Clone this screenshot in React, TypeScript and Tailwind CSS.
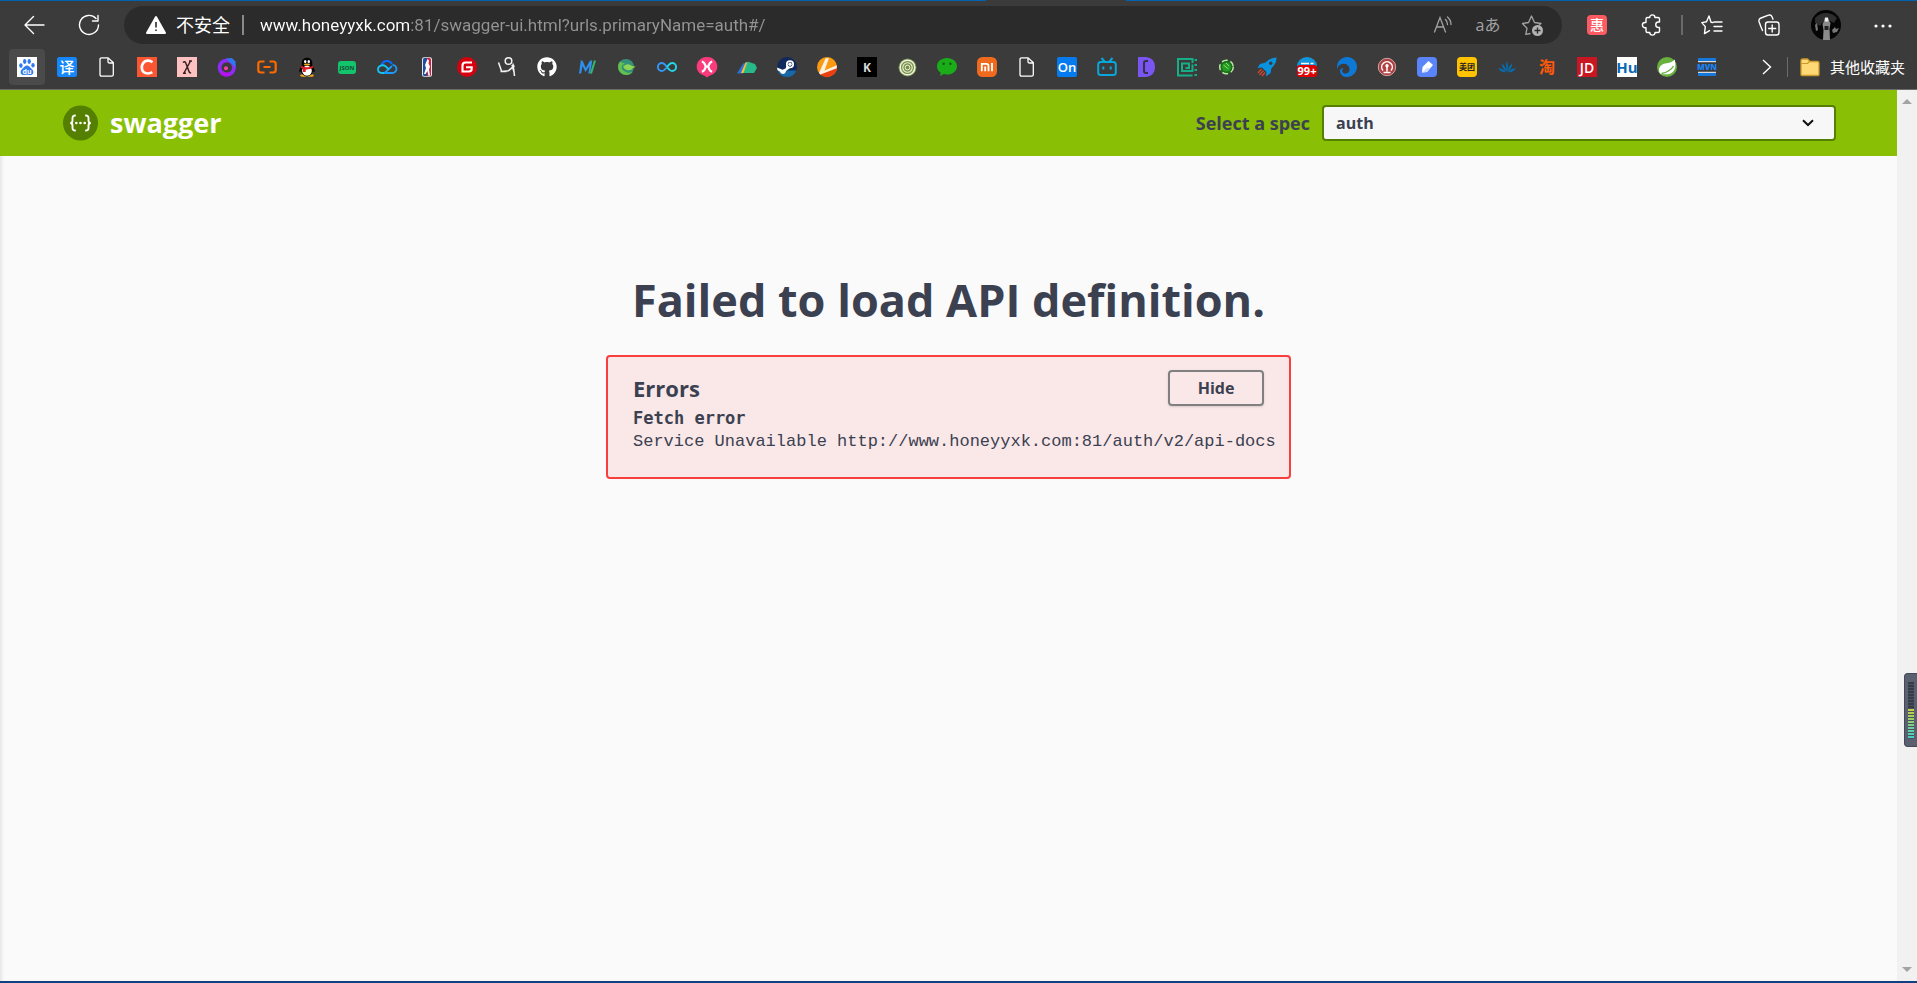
import { ReactNode, useState } from 'react';
import { FaGithub } from 'react-icons/fa';

const FONT = 'font-["Open_Sans","Noto_Sans_CJK_SC",sans-serif]';

interface Bookmark {
    name: string;
    icon: ReactNode;
}

const PageIcon = () => (
    <path d="M3 2.500Q3 .8 4.700 .8h6.300L16.300 5.500v12q0 1.700-1.700 1.700H4.700Q3 19.200 3 17.500zM11 1v3.500Q11 6 12.500 6H16" fill="none" stroke="#fff" strokeWidth="1.300" />
);

const bookmarks: Bookmark[] = [
    {
        name: 'Baidu',
        icon: (
            <>
                <rect width="20" height="20" fill="#fff" />
                <g fill="#2f7cf0">
                    <ellipse cx="3.900" cy="8.600" rx="1.700" ry="2.300" />
                    <ellipse cx="7.700" cy="4.500" rx="1.700" ry="2.400" />
                    <ellipse cx="12.200" cy="4.500" rx="1.700" ry="2.400" />
                    <ellipse cx="16" cy="8.300" rx="1.700" ry="2.200" />
                    <path d="M10 8.500c2 0 2.800 1.500 4 2.800 1.600 1.500 2.900 2.800 2.300 4.800-.6 2-2.500 2.200-4 1.900-1.600-.3-3-.3-4.600 0-1.500.3-3.400.1-4-1.900-.6-2 .7-3.300 2.300-4.800 1.200-1.300 2-2.800 4-2.800z" />
                </g>
                <text x="10" y="16.800" fontSize="7" fontWeight="700" textAnchor="middle" fill="#fff">du</text>
            </>
        ),
    },
    {
        name: 'Translate',
        icon: (
            <>
                <rect width="20" height="20" rx="2.500" fill="#1687fb" />
                <text x="10" y="15.500" fontSize="15" fontWeight="500" textAnchor="middle" fill="#fff">译</text>
            </>
        ),
    },
    { name: 'Page', icon: <PageIcon /> },
    {
        name: 'CSDN',
        icon: (
            <>
                <rect width="20" height="20" fill="#fc5531" />
                <path d="M15.500 5.200C12.500 2.900 8.300 3 6.200 6c-2 2.800-1.900 6.800.4 9 2.300 2 6 1.900 8.700.2" fill="none" stroke="#fff" strokeWidth="2.700" />
            </>
        ),
    },
    {
        name: 'Chi',
        icon: (
            <>
                <rect width="20" height="20" fill="#fdc1c1" />
                <path d="M6 5.500q2-2 3 1l3 8q.8 2 2 1M13.500 4L7 16M6 16.200h3M12 4h3" fill="none" stroke="#3a2020" strokeWidth="1.500" />
            </>
        ),
    },
    {
        name: 'Orbit',
        icon: (
            <>
                <circle cx="9.800" cy="10.500" r="7.200" fill="none" stroke="#8d2cf5" strokeWidth="3.800" />
                <path d="M3 16.500a9 9 0 0011 2l-1.500-3.500a5.500 5.500 0 01-6.500-1.200z" fill="#b512f0" />
                <path d="M9 1.500l9.500 9V4.500L15 1z" fill="#2f78ec" />
                <circle cx="9" cy="11.300" r="2" fill="#ff3fa8" />
            </>
        ),
    },
    {
        name: 'Aliyun',
        icon: (
            <path d="M7.500 4.500H3.800Q1.300 4.500 1.300 7v6q0 2.500 2.500 2.500h3.700M12.500 4.500h3.700q2.500 0 2.500 2.500v6q0 2.500-2.500 2.500h-3.700M6.500 10h7" fill="none" stroke="#ff6a00" strokeWidth="2.200" />
        ),
    },
    {
        name: 'QQ',
        icon: (
            <>
                <ellipse cx="6.500" cy="18.500" rx="3.300" ry="1.300" fill="#f7a81b" />
                <ellipse cx="13.500" cy="18.500" rx="3.300" ry="1.300" fill="#f7a81b" />
                <path d="M10 .8c3.700 0 5.300 2.500 5.300 5.800v2.200c1.500 1.800 2.600 4 2.500 5.800-.1 1-.9.500-1.800-.6-.5 3-2.600 5-6 5s-5.500-2-6-5c-.9 1.100-1.700 1.600-1.800.6-.1-1.800 1-4 2.500-5.800V6.600C4.700 3.300 6.300.8 10 .8z" fill="#050505" />
                <ellipse cx="10" cy="13.700" rx="4.800" ry="5" fill="#fff" />
                <ellipse cx="8.200" cy="4.600" rx="1.200" ry="1.600" fill="#fff" />
                <ellipse cx="11.800" cy="4.600" rx="1.200" ry="1.600" fill="#fff" />
                <ellipse cx="10" cy="7.500" rx="3.200" ry="1" fill="#f7a81b" />
                <path d="M4.300 8.800q5.700 3 11.400 0l.5 1.900q-4 2-7.500 1.700v2.600H6v-3.200l-2.200-1.100z" fill="#e01b24" />
            </>
        ),
    },
    {
        name: 'JSON',
        icon: (
            <>
                <rect x="1" y="4" width="18" height="13" rx="3" fill="#12c46b" />
                <text x="10" y="12.800" fontSize="6" fontWeight="700" textAnchor="middle" fill="#1b4a35">JSON</text>
            </>
        ),
    },
    {
        name: 'Tencent Cloud',
        icon: (
            <>
                <path d="M4.500 8.500A5.600 5.600 0 0115 7" fill="none" stroke="#0a6cff" strokeWidth="2" />
                <path d="M15.500 7.800a4 4 0 01-.3 8.200H7.500l7.500-7" fill="none" stroke="#1a9bff" strokeWidth="1.800" />
                <path d="M12 12.500L8.500 9.300C6 7.300 1 8.300 1 12.300 1 14.500 2.500 16 5 16h2" fill="none" stroke="#12c6f5" strokeWidth="1.800" />
            </>
        ),
    },
    {
        name: 'NBA',
        icon: (
            <>
                <rect x="5" y=".3" width="10" height="19.400" rx="2" fill="#e8e8ee" />
                <path d="M6 2.500Q6 1 7.500 1H10v18H7.500Q6 19 6 17.500z" fill="#1d4f9f" />
                <path d="M10 1h2.500Q14 1 14 2.500v15q0 1.500-1.500 1.500H10z" fill="#d2213c" />
                <path d="M10.500 2l1.500 1.500-.5 3 1.500 3-1 3 1 6-1.500.5-1-5-2 3-1.500 0 2-6-1-3z" fill="#fff" />
            </>
        ),
    },
    {
        name: 'Gitee',
        icon: (
            <>
                <circle cx="10" cy="10" r="10" fill="#d8000f" />
                <path d="M15 5.500H8.500q-3 0-3 3v6h6.500q2.700 0 2.700-2.700v-1.500H9" fill="none" stroke="#fff" strokeWidth="2.100" />
            </>
        ),
    },
    {
        name: 'Dancer',
        icon: (
            <g fill="none" stroke="#f4f4f4" strokeWidth="1.500">
                <circle cx="11.500" cy="4" r="3.300" />
                <path d="M1.500 5.500l3.200 9 6.800-.8 6-5M16 6.500l1.500 12.500M3.500 14.500h6M15 8l2 7" />
            </g>
        ),
    },
    { name: 'GitHub', icon: <FaGithub size={20} color="#fff" /> },
    {
        name: 'Mark',
        icon: (
            <>
                <path d="M2 16.500h2.200L5.500 9l3 6 4-6-1.200 7.500h2L15.300 3.500h-2.200L8.800 11 5.500 3.500H3.800z" fill="#2f8fea" />
                <path d="M18 3.500l-4 13" stroke="#30bd67" strokeWidth="2" />
            </>
        ),
    },
    {
        name: 'Leaf',
        icon: (
            <>
                <circle cx="9" cy="10" r="8" fill="#35907a" />
                <path d="M3 4.500A8 8 0 003 15a8 8 0 0013-.5 8 8 0 01-11-2.500Q3.500 8 8 6.500 5 6 3 4.500z" fill="#63c04c" />
                <path d="M6 9.500q5-4 9-.5l4 .7-3 1.300q-2 3-6 2-3-1-4-3.500z" fill="#8ed554" />
            </>
        ),
    },
    {
        name: 'Infinity',
        icon: (
            <>
                <path d="M10 10C8 7.300 6.800 6 4.900 6a4 4 0 000 8c1.900 0 3.100-1.300 5.100-4" fill="none" stroke="#3297f8" strokeWidth="1.900" />
                <path d="M10 10c2-2.700 3.200-4 5.100-4a4 4 0 010 8c-1.900 0-3.100-1.300-5.100-4" fill="none" stroke="#20d8e8" strokeWidth="1.900" />
            </>
        ),
    },
    {
        name: 'XMind',
        icon: (
            <>
                <path d="M10 0a9.800 9.500 0 012.500 18.800L10 20.500l-2.500-1.700A9.800 9.500 0 0110 0z" fill="#fb3b7b" />
                <path d="M4.800 4.700Q7 5 8.300 8.300q.6 1.400 0 2.800Q7 14.300 4.800 14.700M15.200 4.700Q13 5 11.700 8.300q-.6 1.400 0 2.800 1.300 3.200 3.500 3.600M8.500 9.700h3" fill="none" stroke="#fff" strokeWidth="2.200" />
            </>
        ),
    },
    {
        name: 'Hills',
        icon: (
            <>
                <path d="M0 16.500L6 6.500l3-1-3 11z" fill="#2f6fde" />
                <path d="M4 16L8.500 5.500 11.500 5 8 16z" fill="#fbc02d" />
                <path d="M6.500 16l4-11.500L18 7l2 4-3 5z" fill="#27b98a" />
            </>
        ),
    },
    {
        name: 'Steam',
        icon: (
            <>
                <circle cx="10" cy="10" r="10" fill="#10285b" />
                <path d="M.6 13.500a10 10 0 0018.800 0z" fill="#1869a5" />
                <path d="M0 10.500l5.500 2.200 3-1.200 1.500-4 3 3.500-4 3q-.5 3-3.200 3-2.300 0-2.900-2.400L.5 13.200z" fill="#fff" />
                <circle cx="13" cy="7.300" r="3.200" fill="#10285b" stroke="#fff" strokeWidth="1.700" />
                <circle cx="13" cy="7.300" r="1.700" fill="#fff" />
            </>
        ),
    },
    {
        name: 'Flare',
        icon: (
            <>
                <circle cx="10" cy="10" r="10" fill="#fb9a12" />
                <path d="M19.800 8.500a10 10 0 01-17 8.500z" fill="#ea3f10" />
                <path d="M8.500 1.500L12 1 7.500 13.500l12.300-5.300v3L3.500 17.500l-1.500-1.500z" fill="#fff1df" />
            </>
        ),
    },
    {
        name: 'Kuang',
        icon: (
            <>
                <rect width="20" height="20" fill="#000" />
                <text x="10" y="14.500" fontSize="12" fontWeight="700" textAnchor="middle" fill="#d9d9d9">K</text>
            </>
        ),
    },
    {
        name: 'Rings',
        icon: (
            <g fill="none" stroke="#eef3dc">
                <circle cx="10.500" cy="10.500" r="9" fill="#78904b" stroke="none" />
                <circle cx="10.500" cy="10.500" r="7.300" strokeWidth="1.500" />
                <circle cx="10.500" cy="10.500" r="4.700" strokeWidth="1.100" />
                <circle cx="10.500" cy="10.500" r="2.400" strokeWidth="1" />
            </g>
        ),
    },
    {
        name: 'WeChat',
        icon: (
            <>
                <path d="M10 1c5.600 0 10 3.600 10 8.200s-4.400 8.300-10 8.300c-1.200 0-2.300-.1-3.300-.4L3 19l.7-3.300C1.400 14.200 0 11.900 0 9.200 0 4.600 4.400 1 10 1z" fill="#1aad19" />
                <circle cx="6.600" cy="6.800" r="1.300" fill="#155d17" />
                <circle cx="13.400" cy="6.800" r="1.300" fill="#155d17" />
            </>
        ),
    },
    {
        name: 'Xiaomi',
        icon: (
            <>
                <rect width="20" height="20" rx="5.500" fill="#f06a1d" />
                <path d="M4.800 14.200V6.800h4.500q2.200 0 2.200 2.200v5.200M8.200 14.200V9.500M15 6v8.200" fill="none" stroke="#fff" strokeWidth="1.800" />
            </>
        ),
    },
    { name: 'Document', icon: <PageIcon /> },
    {
        name: 'ProcessOn',
        icon: (
            <>
                <rect width="20" height="20" rx="2" fill="#067bef" />
                <text x="10" y="15" fontSize="13" fontWeight="600" textAnchor="middle" fill="#fff">On</text>
            </>
        ),
    },
    {
        name: 'Bilibili',
        icon: (
            <g stroke="#09a6dc" strokeWidth="2" fill="none">
                <rect x="1.200" y="5" width="17.600" height="13" rx="2.500" />
                <path d="M4.500 1l3 3.500M15.500 1l-3 3.500M6.300 9.500v3M13.700 9.500v3" />
            </g>
        ),
    },
    {
        name: 'Docs',
        icon: (
            <>
                <path d="M1 0h8q9 1 9 10t-9 10H1z" fill="#7a55f2" />
                <path d="M11 4H9Q7 4 7 6v8q0 2 2 2h2" fill="none" stroke="#343148" strokeWidth="2" />
            </>
        ),
    },
    {
        name: 'Maze',
        icon: (
            <path d="M15.500 6V2H1v16.500h14.500M15.500 7.500v6.500H5V6.500h7v4.500H8.500M17.500 3h2.500M17.500 8h2.500M17.500 13h2.500M17.500 18h2.500" fill="none" stroke="#15ae86" strokeWidth="2" />
        ),
    },
    {
        name: 'Cell',
        icon: (
            <>
                <circle cx="9.500" cy="10" r="7" fill="#1d6a20" />
                <circle cx="9.500" cy="10" r="6.800" fill="none" stroke="#b9e6a2" strokeWidth="1.500" strokeDasharray="6 3" />
                <circle cx="9.500" cy="10" r="4.500" fill="#239c1f" />
                <path d="M6.500 8l5 4M9 6l3 3" stroke="#8dde6a" />
            </>
        ),
    },
    {
        name: 'Rocket',
        icon: (
            <>
                <path d="M19.500.5q-7 .5-11 5L3 7 .5 11 5 10.500 9.500 15 9 19.500l4.500-3.500 1-5q5-4 5-10.500z" fill="#0993df" />
                <circle cx="13.700" cy="6.300" r="1.700" fill="#3b3b3b" />
                <path d="M4.500 12L1 16M6.500 13.500L2.500 18M8 15.500L5 19" stroke="#d8452a" strokeWidth="1.200" />
            </>
        ),
    },
    {
        name: 'Messages',
        icon: (
            <>
                <path d="M0 9a10 9 0 0120 0z" fill="#1296db" />
                <path d="M4 6.500h8M13.500 6.500h3" stroke="#fff" strokeWidth="1.500" />
                <rect y="8" width="20" height="12" rx="3" fill="#df0000" />
                <text x="10" y="17.800" fontSize="11" fontWeight="700" textAnchor="middle" fill="#fff">99+</text>
            </>
        ),
    },
    {
        name: 'Crescent',
        icon: (
            <path d="M5.500 18.900A10 10 0 10.200 12q1.300-4.700 6-5.200 5.300 0 6.300 4.700.3 4.300-3.700 5-3.300 0-3.600-2.800 0-1.900 1.600-2.700-3.400-.4-4 2.500-.2 3 2.700 5.400z" fill="#0d78d6" />
        ),
    },
    {
        name: 'Railway',
        icon: (
            <>
                <circle cx="10" cy="10" r="8.700" fill="#b04042" stroke="#cfa5a3" />
                <path d="M6 13.500a5.300 5.300 0 118 0M10 9v5.500M6.500 15.500h7" fill="none" stroke="#fff" strokeWidth="1.500" />
                <circle cx="10" cy="8.800" r="1.700" fill="#fff" />
            </>
        ),
    },
    {
        name: 'Notes',
        icon: (
            <>
                <rect width="20" height="20" rx="4" fill="#5a84fa" />
                <path d="M5 15.500l.5-5.500L11.500 4l4.500 4-6 7z" fill="#fff" />
                <path d="M5 15.500l5-.5 3-3.500-3-1z" fill="#d2deff" />
            </>
        ),
    },
    {
        name: 'Meituan',
        icon: (
            <>
                <rect width="20" height="20" rx="4" fill="#ffc300" />
                <text x="10" y="13.200" fontSize="8" fontWeight="700" textAnchor="middle" fill="#222">美团</text>
            </>
        ),
    },
    {
        name: 'Huawei',
        icon: (
            <path d="M10 15Q8 9 10 4q2 5 0 11zM9.500 15Q4.500 11 5 6.500q4 3 4.500 8.500zM10.500 15q5-4 4.500-8.500-4 3-4.500 8.500zM9 15.300q-5 .5-8-4 5 0 8 4zM11 15.300q5 .5 8-4-5 0-8 4z" fill="#086bab" />
        ),
    },
    {
        name: 'Taobao',
        icon: (
            <text x="10" y="16" fontSize="16" fontWeight="700" textAnchor="middle" fill="#ff5a0a">淘</text>
        ),
    },
    {
        name: 'JD',
        icon: (
            <>
                <rect width="20" height="20" fill="#c81623" />
                <text x="10" y="15.500" fontSize="14" fontWeight="600" textAnchor="middle" fill="#fff">JD</text>
            </>
        ),
    },
    {
        name: 'Hutool',
        icon: (
            <>
                <rect width="20" height="20" fill="#fff" />
                <text x="10" y="15.500" fontSize="15" fontWeight="700" textAnchor="middle" fill="#0868b5">Hu</text>
            </>
        ),
    },
    {
        name: 'Spring',
        icon: (
            <>
                <circle cx="10" cy="10" r="10" fill="#68b13e" />
                <path d="M17.800 2.500q1 4.500.4 8-1.500 6-7 6.700-4.500.3-7.500-.2-2.200-2-1.700-5Q3 7.500 8 6.500q7-.5 9.800-4z" fill="#fff" />
                <path d="M4.500 16.500q8.500-1.500 12-7.500" fill="none" stroke="#68b13e" strokeWidth="1.400" />
            </>
        ),
    },
    {
        name: 'Maven',
        icon: (
            <>
                <path d="M1 1h18v3H1zM1 16h18v3H1z" fill="#1778dc" />
                <path d="M1 4.700h18M1 15.300h18" stroke="#fff" />
                <text x="10" y="13.300" fontSize="8" fontWeight="800" textAnchor="middle" fill="#1b83f3">MVN</text>
            </>
        ),
    },
];

interface ToolButtonProps {
    label: string;
    children: ReactNode;
}

function ToolButton({ label, children }: ToolButtonProps) {
    return (
        <button type="button" aria-label={label} className="flex h-9 w-11 shrink-0 items-center justify-center rounded hover:bg-white/10">
            <svg width="22" height="22" viewBox="0 0 22 22" fill="none" stroke="#fff" strokeWidth="1.400" strokeLinecap="round" strokeLinejoin="round">
                {children}
            </svg>
        </button>
    );
}

function AddressBar() {
    const [url, setUrl] = useState('www.honeyyxk.com:81/swagger-ui.html?urls.primaryName=auth#/');

    return (
        <div className="mx-[13px] flex h-[38px] min-w-0 flex-1 items-center rounded-full bg-[#2b2b2b] pr-2 pl-[22px]">
            <svg width="20" height="20" viewBox="0 0 20 20" className="shrink-0">
                <path d="M10 2L19 18H1z" fill="#fff" stroke="#fff" strokeWidth="2" strokeLinejoin="round" />
                <path d="M10 7v5.500M10 14.500v1.500" stroke="#2b2b2b" strokeWidth="1.600" />
            </svg>
            <span className="ml-[10px] shrink-0 text-lg leading-6 text-white">不安全</span>
            <span className="mx-3 h-5 w-[2px] shrink-0 bg-[#8a8a8a]" />
            {/* host in white, the rest of the url dimmed */}
            <input
                aria-label="Address"
                value={url}
                onChange={(e) => setUrl(e.target.value)}
                className="ml-1 min-w-0 flex-1 bg-[linear-gradient(to_right,#ffffff_149px,#949494_149px)] bg-clip-text font-[Roboto,sans-serif] text-[17px] leading-6 text-transparent caret-white outline-none"
            />
            <button type="button" aria-label="Read aloud" className="flex h-9 w-11 items-center justify-center">
                <svg width="22" height="22" viewBox="0 0 22 22" fill="none" stroke="#a3a3a3" strokeWidth="1.300" strokeLinecap="round">
                    <path d="M1.500 18L7 3.500 12.500 18M3.500 13h7M12.500 5.500q2 2 2 5M14.500 3q3.500 3 3.500 7.500" />
                </svg>
            </button>
            <button type="button" aria-label="Translate page" className="flex h-9 w-11 items-center justify-center text-base text-[#a3a3a3]">aあ</button>
            <button type="button" aria-label="Add to favorites" className="flex h-9 w-11 items-center justify-center">
                <svg width="22" height="22" viewBox="0 0 22 22" fill="none">
                    <path d="M9.500 19.500l-4.700.8L6 14.300 1.500 9.500l6-1L10.500 2l3 6.500 6.500 1-2.500 2.200" stroke="#a3a3a3" strokeWidth="1.300" strokeLinejoin="round" />
                    <circle cx="16.500" cy="16.500" r="5.500" fill="#b3b3b3" />
                    <path d="M16.500 13.500v6M13.500 16.500h6" stroke="#2b2b2b" strokeWidth="1.400" />
                </svg>
            </button>
        </div>
    );
}

function Toolbar() {
    return (
        <div className="flex items-center px-3 pt-[5px]">
            <div className="flex gap-[11px]">
                <ToolButton label="Back"><path d="M21 11H2M10.500 2.500L2 11l8.500 8.500" /></ToolButton>
                <ToolButton label="Refresh"><path d="M20.500 11A9.500 9.500 0 1118 4.500M20 1.500V7h-5.500" /></ToolButton>
            </div>
            <AddressBar />
            <div className="flex items-center gap-[11px]">
                <button type="button" aria-label="Coupons" className="flex h-9 w-11 items-center justify-center">
                    <span className="flex size-5 items-center justify-center rounded bg-[#fc5b62] text-sm leading-none font-medium text-white">惠</span>
                </button>
                <ToolButton label="Extensions">
                    <path d="M6.500 3.500h2.200a2.600 2.600 0 015.200 0H17q1.500 0 1.500 1.500v3h-1a2.500 2.500 0 000 5.500h1V17q0 1.500-1.500 1.500h-3a2.600 2.600 0 01-5.200 0H6.500Q5 18.500 5 17v-3.300H4a2.600 2.600 0 010-5.200h1V5q0-1.500 1.500-1.500z" />
                </ToolButton>
            </div>
            <span className="mx-[7px] h-5 w-[2px] bg-[#696969]" />
            <div className="flex items-center gap-[13px]">
                <ToolButton label="Favorites">
                    <path d="M12 8.500l-2-.3L8 2 5.500 7.800l-4.700.8 3.500 4-.8 7 5-3M13 8h8M13 12.500h8M13 17h8" />
                </ToolButton>
                <ToolButton label="Collections">
                    <rect x="7.500" y="8" width="13.500" height="13" rx="2.500" />
                    <path d="M14.200 11v7M10.700 14.500h7M4.500 16.500Q2.500 12 1 7.500.5 5 3 4l7.500-2.800q2.500-.7 3.500 1.500l1 2.500" />
                </ToolButton>
                <button type="button" aria-label="Profile" className="flex h-9 w-11 items-center justify-center">
                    <svg width="30" height="30" viewBox="0 0 30 30">
                        <circle cx="15" cy="15" r="15" fill="#050505" />
                        <path d="M4 8q5-5 11-5t11 5l-3 5-4-2-3 3-5-1-2 3-5-3z" fill="#2e2e2e" />
                        <path d="M14 8h3l1 3 1.500 2-1 6 .5 11h-7l.5-10-1-6 2-3z" fill="#8a8a8a" />
                        <path d="M14 7.500h3l.5 4h-4z" fill="#eee" />
                        <path d="M13.500 16h4v4h-4z" fill="#222" />
                        <path d="M4 15l2-2 1 7-2 1zM21 20l3-3 1 2 3-1-2 4-4 1z" fill="#777" />
                    </svg>
                </button>
                <ToolButton label="More">
                    <g fill="#fff" stroke="none"><circle cx="4" cy="12" r="1.600" /><circle cx="11" cy="12" r="1.600" /><circle cx="18" cy="12" r="1.600" /></g>
                </ToolButton>
            </div>
        </div>
    );
}

function BookmarksBar() {
    return (
        <nav className="flex h-[46px] items-center border-b border-[#6b6b6b] pr-3 pl-[9px]">
            <div className="flex flex-1 gap-1">
                {bookmarks.map((b, i) => (
                    <a key={b.name} href="#/" aria-label={b.name} className={`flex size-9 shrink-0 items-center justify-center rounded-sm ${i === 0 ? 'bg-[#4a4a4a]' : 'hover:bg-[#4a4a4a]'}`}>
                        <svg width="20" height="20" viewBox="0 0 20 20" className="overflow-visible">{b.icon}</svg>
                    </a>
                ))}
            </div>
            <button type="button" aria-label="More favorites" className="flex h-9 w-8 items-center justify-center">
                <svg width="10" height="18" viewBox="0 0 10 18" fill="none" stroke="#fff" strokeWidth="1.400"><path d="M1 2l7.500 7L1 16" /></svg>
            </button>
            <span className="mr-3 ml-1 h-5 w-px bg-[#6b6b6b]" />
            <a href="#/" className="flex items-center gap-[10px] text-[15px] leading-5 text-white">
                <svg width="20" height="20" viewBox="0 0 20 20">
                    <path d="M1 3.500Q1 2 2.500 2h5L10 4.500h7.500Q19 4.500 19 6v11.500q0 1-1 1H2q-1 0-1-1z" fill="#ffd976" stroke="#c99a2b" strokeWidth="1.300" />
                    <path d="M1.500 6.500h6l2-2" fill="none" stroke="#c99a2b" strokeWidth="1.200" />
                </svg>
                其他收藏夹
            </a>
        </nav>
    );
}

function Topbar() {
    return (
        <header className="flex h-[66px] items-center justify-between bg-[#89bf04] pr-[61px] pl-[63px]">
            <a href="#/" className="flex items-center gap-3 text-[27px] leading-9 font-bold text-white">
                <svg width="35" height="36" viewBox="0 0 35 36">
                    <circle cx="17.500" cy="18" r="17.500" fill="#547f00" />
                    <path d="M12.800 10.500q-3.300-.3-3.300 2.500v2.500q0 2.500-2.300 2.500 2.300 0 2.300 2.500V23q0 2.800 3.300 2.500M22.200 10.500q3.300-.3 3.300 2.500v2.500q0 2.500 2.300 2.500-2.300 0-2.300 2.500V23q0 2.800-3.300 2.500" fill="none" stroke="#fff" strokeWidth="1.900" />
                    <g fill="#fff"><circle cx="13.300" cy="18" r="1.300" /><circle cx="17.500" cy="18" r="1.300" /><circle cx="21.700" cy="18" r="1.300" /></g>
                </svg>
                swagger
            </a>
            <div className="flex items-center gap-3">
                <label htmlFor="spec" className="text-lg leading-6 font-bold text-[#3b4151]">Select a spec</label>
                <div className="relative">
                    <select id="spec" className="block h-9 w-[514px] appearance-none rounded border-2 border-[#547f00] bg-[#f7f7f7] px-3 text-base font-bold text-[#3b4151]">
                        <option>auth</option>
                    </select>
                    <svg width="12" height="8" viewBox="0 0 12 8" className="pointer-events-none absolute top-[14px] right-[22px]">
                        <path d="M1 1.200l5 4.800 5-4.800" fill="none" stroke="#111" strokeWidth="2" />
                    </svg>
                </div>
            </div>
        </header>
    );
}

function ErrorPanel() {
    const [open, setOpen] = useState(true);

    return (
        <div className="mt-[27px] w-[685px] max-w-full rounded border-2 border-[#f93e3e] bg-[#fae7e7] px-[25px] pt-[13px] pb-[23px]">
            <div className="flex items-center justify-between">
                <h4 className="text-[22px] leading-9 font-bold">Errors</h4>
                <button type="button" onClick={() => setOpen(!open)} className="h-9 w-24 rounded border-2 border-[#808080] text-base font-bold shadow-sm">
                    {open ? 'Hide' : 'Show'}
                </button>
            </div>
            {open && (
                <div className="whitespace-nowrap">
                    <h4 className="font-['DejaVu_Sans_Mono',monospace] text-[17px] leading-6 font-bold">Fetch error</h4>
                    <p className="font-['Liberation_Mono',monospace] text-[17px] leading-6">
                        Service Unavailable http://www.honeyyxk.com:81/auth/v2/api-docs
                    </p>
                </div>
            )}
        </div>
    );
}

function Scrollbar() {
    return (
        <div className="flex w-5 shrink-0 flex-col items-center justify-between bg-[#f1f1f1] py-[9px]">
            <svg width="10" height="5" viewBox="0 0 10 5"><path d="M5 0l5 5H0z" fill="#a3a3a3" /></svg>
            <svg width="10" height="5" viewBox="0 0 10 5"><path d="M5 5l5-5H0z" fill="#a3a3a3" /></svg>
        </div>
    );
}

const levels = [
    '#363b48', '#363b48', '#363b48', '#363b48', '#363b48', '#363b48', '#363b48', '#363b48', '#363b48',
    '#c5cf4c', '#b5cf55', '#abd05f', '#9ccf68', '#8ed078', '#7fd086', '#6ad09c', '#5fd0a8', '#56cfb0', '#48cfbd',
];

function LevelMeter() {
    return (
        <div className="absolute top-[673px] right-0 flex h-[74px] w-[13px] flex-col items-center justify-center rounded-l border border-r-0 border-[#444957] bg-[#5b6070]">
            {levels.map((color, i) => (
                <span key={i} className="h-[3px] w-[6px] border-b border-[#4b505f]" style={{ backgroundColor: color }} />
            ))}
        </div>
    );
}

export default function App() {
    return (
        <div className={`relative flex min-h-screen flex-col border-b-2 border-[#123f82] bg-[#fafafa] ${FONT}`}>
            <div className="bg-[#3b3b3b]">
                {/* window accent line, broken under the active tab */}
                <div className="flex h-px">
                    <span className="flex-[986] bg-[#0063b1]" />
                    <span className="flex-[140]" />
                    <span className="flex-[791] bg-[#0063b1]" />
                </div>
                <Toolbar />
                <BookmarksBar />
            </div>
            <div className="flex flex-1 shadow-[inset_3px_0_3px_-1px_#e6e6e6]">
                <div className="min-w-0 flex-1">
                    <Topbar />
                    <main className="flex flex-col items-center pt-[116px] text-[#3b4151]">
                        <h1 className="text-[45px] leading-[56px] font-bold">Failed to load API definition.</h1>
                        <ErrorPanel />
                    </main>
                </div>
                <Scrollbar />
            </div>
            <LevelMeter />
        </div>
    );
}
